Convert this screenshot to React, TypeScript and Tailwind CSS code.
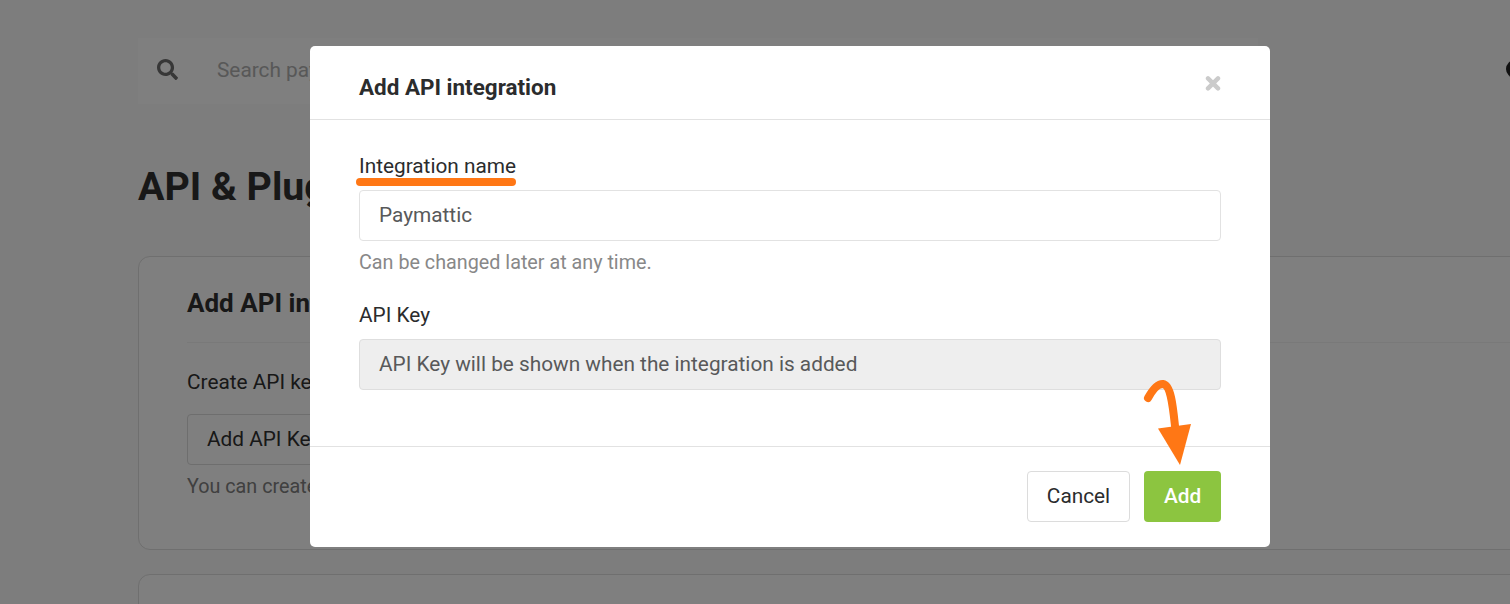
import { FaSearch } from "react-icons/fa";

function Backdrop() {
  return (
    <div className="flex h-full w-[1600px] flex-col bg-[#fafafa] pl-[138px] text-[20.8px] leading-6 text-[#303030]">
      <div className="mt-[38px] flex h-[66px] shrink-0 items-center">
        <div className="flex h-full w-[1120px] items-center bg-[#fefefe] pb-1 pl-[19px]">
          <FaSearch className="size-[21px] text-[#6e6e6e]" />
          <span className="ml-[39px] mt-0.5 whitespace-nowrap text-[#b0b0b0]">Search payments</span>
        </div>
        <div className="ml-[248px] mt-[-4px] size-[18px] rounded-full bg-[#222]" />
      </div>
      <h1 className="mt-[60px] h-[46px] text-[39.3px] font-bold leading-[46px]">API &amp; Plugins</h1>
      <section className="mt-[46px] h-[294px] shrink-0 rounded-xl border border-[#dedede] bg-white px-12">
        <h2 className="mt-[31px] h-[30px] text-[26px] font-bold leading-[30px]">Add API integration</h2>
        <div className="mt-6 h-px bg-[#f2f2f2]" />
        <p className="mt-[27px] h-6">Create API key</p>
        <div className="mt-5 flex h-[51px] w-[170px] items-center whitespace-nowrap rounded border border-[#dcdcdc] pb-0.5 pl-[19px]">Add API Key</div>
        <p className="mt-2.5 h-6 text-[19.76px] text-[#808080]">You can create</p>
      </section>
      <section className="mt-6 h-40 shrink-0 rounded-xl border border-[#dedede] bg-white" />
    </div>
  );
}

function Modal() {
  return (
    <div className="flex h-[501px] w-[960px] flex-col rounded-[5px] bg-white text-[20.8px] leading-6 text-[#2b2c2d]">
      <header className="flex h-[74px] shrink-0 items-start justify-between border-b border-[#e2e2e2] px-[49px]">
        <h2 className="mt-[28px] text-[22.45px] font-bold leading-[26px]">Add API integration</h2>
        <svg className="mt-[29px] size-4" viewBox="0 0 16 16" stroke="#cbcbcb" strokeWidth="4.4" strokeLinecap="round">
          <path d="M3 3.4 13 13.4M13 3.4 3 13.4" />
        </svg>
      </header>
      <div className="flex grow flex-col px-[49px]">
        <label className="relative mt-[34px] h-6 self-start">
          Integration name
          <span className="absolute left-[-3px] top-[24px] h-2 w-[160px] rounded-full bg-[#ff7715]" />
        </label>
        <div className="mt-3 flex h-[51px] items-center rounded border border-[#e2e2e2] pl-[19px] text-[#58595a]">
          <span className="-mt-px">Paymattic</span>
        </div>
        <p className="mt-2.5 h-6 text-[19.76px] text-[#888]">Can be changed later at any time.</p>
        <p className="mt-7 h-6">API Key</p>
        <div className="mt-3 flex h-[51px] items-center rounded border border-[#dedede] bg-[#eee] pl-[19px] text-[#58595a]">
          <span className="-mt-px">API Key will be shown when the integration is added</span>
        </div>
      </div>
      <footer className="relative flex h-[101px] shrink-0 justify-end gap-3.5 border-t border-[#e2e2e2] px-[49px] pt-6">
        <button className="flex h-[51px] w-[103px] items-center justify-center rounded border border-[#dcdcdc] pb-0.5">Cancel</button>
        <button className="flex h-[51px] w-[77px] items-center justify-center rounded bg-[#8cc540] pb-0.5 font-medium text-white">Add</button>
        <svg className="absolute left-[830px] top-[-72px] h-[91px] w-[56px]" viewBox="0 0 56 91" fill="none">
          <path d="M8 23C13 14 18 8.5 23 9C31 10 33 32 35 51" stroke="#ff7715" strokeWidth="8" strokeLinecap="round" />
          <path d="M18 53.5 51 49 40 90Z" fill="#ff7715" />
        </svg>
      </footer>
    </div>
  );
}

export default function App() {
  return (
    <main className="relative h-[604px] w-full overflow-hidden font-['Roboto',sans-serif]">
      <Backdrop />
      <div className="absolute inset-0 flex items-start bg-black/50 pl-[310px] pt-[46px]">
        <Modal />
      </div>
    </main>
  );
}
